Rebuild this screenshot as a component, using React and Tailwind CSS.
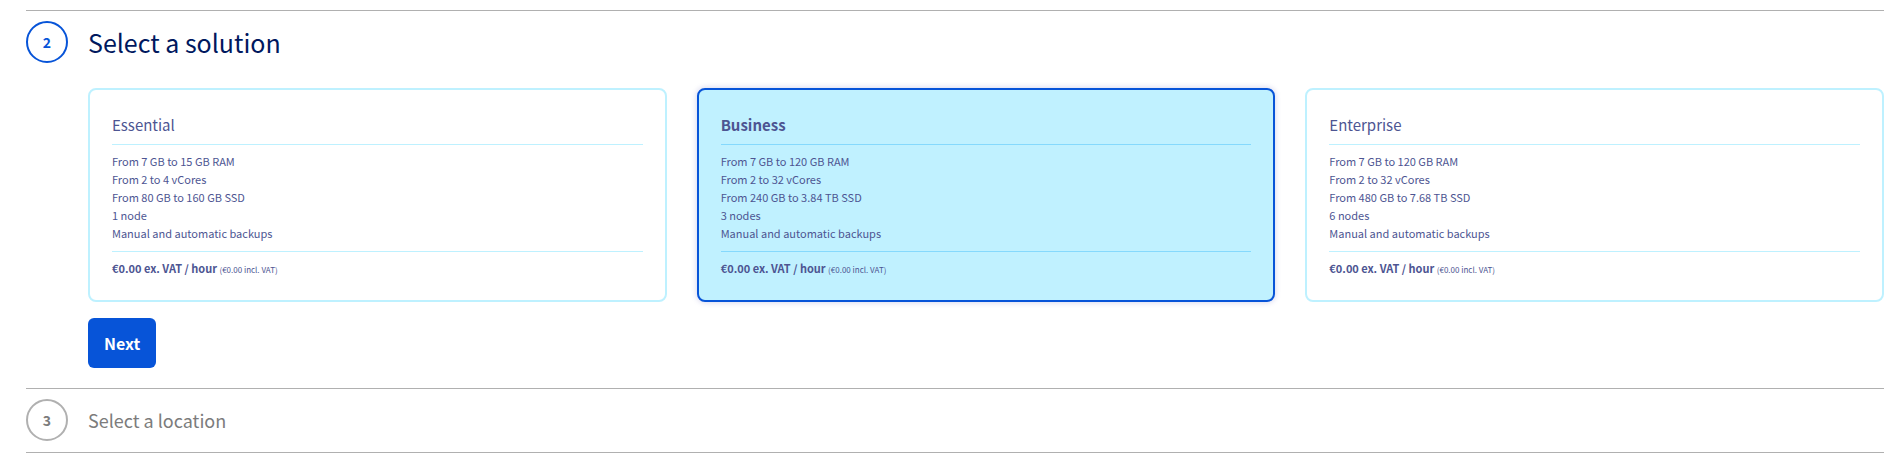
import { useState } from "react";
import clsx from "clsx";

const solutions = [
  {
    id: "essential",
    name: "Essential",
    specs: ["From 7 GB to 15 GB RAM", "From 2 to 4 vCores", "From 80 GB to 160 GB SSD", "1 node", "Manual and automatic backups"],
  },
  {
    id: "business",
    name: "Business",
    specs: ["From 7 GB to 120 GB RAM", "From 2 to 32 vCores", "From 240 GB to 3.84 TB SSD", "3 nodes", "Manual and automatic backups"],
  },
  {
    id: "enterprise",
    name: "Enterprise",
    specs: ["From 7 GB to 120 GB RAM", "From 2 to 32 vCores", "From 480 GB to 7.68 TB SSD", "6 nodes", "Manual and automatic backups"],
  },
];

function StepNumber({ active, children }) {
  return (
    <span
      className={clsx(
        "flex size-[42px] shrink-0 items-center justify-center rounded-full border-2 text-sm font-bold",
        active ? "border-[#0754d8] text-[#0754d8]" : "border-[#b0b0b0] text-[#7c7c7c]"
      )}
    >
      {children}
    </span>
  );
}

function SolutionCard({ solution, selected, onSelect }) {
  const divider = selected ? "border-[#85d9fd]" : "border-[#bef1ff]";
  return (
    <label
      className={clsx(
        "relative block cursor-pointer rounded-lg border-2 px-[22px] pt-[22px] pb-[23px] text-[#4d5592]",
        selected ? "border-[#0754d8] bg-[#c0f1ff] shadow-[0_0_6px_rgba(0,14,156,0.2)]" : "border-[#bef1ff] bg-white"
      )}
    >
      <input type="radio" name="solution" value={solution.id} checked={selected} onChange={onSelect} className="sr-only" />
      <span className={clsx("block pb-1.5 text-[15px] leading-[26px]", selected && "font-bold")}>{solution.name}</span>
      <hr className={clsx("border-t", divider)} />
      <ul className="pt-[7px] pb-[9px] text-[11px] leading-[18px]">
        {solution.specs.map((spec) => (
          <li key={spec}>{spec}</li>
        ))}
      </ul>
      <hr className={clsx("border-t", divider)} />
      <p className="pt-[7px] text-[11px] leading-[18px]">
        <strong>€0.00 ex. VAT / hour</strong> <small className="text-[8px] leading-none">(€0.00 incl. VAT)</small>
      </p>
    </label>
  );
}

export default function App() {
  const [selected, setSelected] = useState("business");
  return (
    <main className="bg-white pt-2.5 pr-[18px] pb-[9px] pl-[26px] font-['Noto_Sans_CJK_SC',sans-serif]">
      <section className="border-t border-[#b0b0b0] pt-2.5 pb-5">
        <header className="flex items-center gap-5">
          <StepNumber active>2</StepNumber>
          <h2 className="text-[25px] leading-8 text-[#00185e]">Select a solution</h2>
        </header>
        <form className="mt-[25px] pl-[62px]" onSubmit={(e) => e.preventDefault()}>
          <fieldset aria-label="Solution" className="grid grid-cols-3 gap-[30px]">
            {solutions.map((s) => (
              <SolutionCard key={s.id} solution={s} selected={s.id === selected} onSelect={() => setSelected(s.id)} />
            ))}
          </fieldset>
          <button type="submit" className="mt-4 block cursor-pointer rounded-md bg-[#0754d8] px-4 py-[13px] text-base leading-6 font-bold text-white">
            Next
          </button>
        </form>
      </section>
      <section className="border-y border-[#b0b0b0] pt-2.5 pb-[11px]">
        <header className="flex items-center gap-5">
          <StepNumber>3</StepNumber>
          <h2 className="text-[18px] leading-8 text-[#7c7c7c]">Select a location</h2>
        </header>
      </section>
    </main>
  );
}
